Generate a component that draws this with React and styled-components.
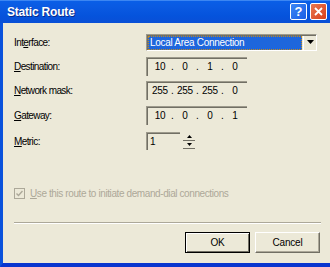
import styled, { createGlobalStyle } from "styled-components";

const GlobalStyle = createGlobalStyle`
  body {
    margin: 0;
    background: #ffffff;
  }
`;

const Window = styled.div`
  width: 330px;
  height: 267px;
  display: flex;
  flex-direction: column;
  font-family: "Liberation Sans", Arial, sans-serif;
  font-size: 10px;
  color: #000;
  overflow: hidden;
`;

const TitleBar = styled.div`
  height: 23px;
  flex: 0 0 23px;
  display: flex;
  align-items: center;
  padding: 0 3px 0 7px;
  background: linear-gradient(#0a5fe8 0%, #0a5ae2 30%, #0553dc 70%, #0a4fd6 100%);
  box-shadow: inset 0 1px 0 #3c86f2;
`;

const Title = styled.span`
  color: #fff;
  font-weight: bold;
  font-size: 12px;
  letter-spacing: -0.2px;
  text-shadow: 1px 1px 0 #0a2b8a;
  margin-top: 1px;
`;

const CaptionButtons = styled.div`
  margin-left: auto;
  display: flex;
  gap: 3px;
`;

const CaptionButton = styled.div`
  width: 15px;
  height: 15px;
  border: 1px solid #fff;
  border-radius: 2px;
  display: flex;
  align-items: center;
  justify-content: center;
  background: ${(p) =>
    p.$close
      ? "linear-gradient(135deg, #e9774f, #d8401c)"
      : "linear-gradient(135deg, #3c86f4, #1a5ee6)"};
  color: #fff;
  font-weight: bold;
  font-size: 13px;
  line-height: 1;
`;

const Body = styled.div`
  flex: 1;
  display: flex;
  flex-direction: column;
  background: #ece9d8;
  border-left: 3px solid #0a52dc;
  border-bottom: 4px solid #0835cf;
  padding: 7px 10px 0 11px;
`;

const Row = styled.div`
  height: ${(p) => p.$h}px;
  display: flex;
  align-items: center;
`;

const Label = styled.span`
  width: 132px;
  flex: 0 0 132px;
  letter-spacing: -0.6px;
`;

const Combo = styled.div`
  width: 171px;
  height: 17px;
  display: flex;
  box-sizing: border-box;
  border-top: 1px solid #9d9a8c;
  border-left: 1px solid #9d9a8c;
  border-right: 1px solid #fff;
  border-bottom: 1px solid #fff;
  box-shadow: inset 1px 1px 0 #716f64;
  padding: 1px 0 0 1px;
`;

const ComboText = styled.div`
  flex: 1;
  background: #1e66dc;
  color: #fff;
  outline: 1px dotted #c48a1c;
  outline-offset: -1px;
  padding-left: 2px;
  display: flex;
  align-items: center;
  letter-spacing: -0.3px;
`;

const ComboButton = styled.div`
  width: 12px;
  background: #ece9d8;
  border-left: 1px solid #fff;
  display: flex;
  align-items: center;
  justify-content: center;
  margin-left: 1px;
`;

const Edit = styled.div`
  width: ${(p) => p.$w}px;
  height: ${(p) => p.$hh || 19}px;
  box-sizing: border-box;
  display: flex;
  align-items: center;
  border-top: 1px solid #9d9a8c;
  border-left: 1px solid #9d9a8c;
  box-shadow: inset 1px 1px 0 #716f64;
  padding-left: 3px;
`;

const Octet = styled.span`
  width: 20px;
  text-align: center;
  letter-spacing: -0.3px;
`;

const Dot = styled.span`
  width: 5px;
  text-align: center;
`;

const Spinner = styled.div`
  margin-left: 3px;
  width: 12px;
  height: 15px;
  display: flex;
  flex-direction: column;
  gap: 1px;
`;

const SpinPart = styled.div`
  flex: 1;
  border-bottom: 1px solid #716f64;
  display: flex;
  align-items: center;
  justify-content: center;
`;

const CheckRow = styled.div`
  margin-top: 32px;
  height: 14px;
  display: flex;
  align-items: center;
  gap: 5px;
  color: #aca899;
  letter-spacing: -0.4px;
  font-size: 10px;
`;

const CheckBox = styled.div`
  width: 9px;
  height: 9px;
  border: 1px solid #aca899;
  display: flex;
  align-items: center;
  justify-content: center;
`;

const Separator = styled.div`
  margin-top: 22px;
  margin-right: -1px;
  height: 0;
  border-top: 1px solid #aca899;
  border-bottom: 1px solid #fff;
`;

const ButtonRow = styled.div`
  margin-top: 8px;
  display: flex;
  justify-content: flex-end;
  gap: 5px;
`;

const Button = styled.div`
  width: 65px;
  height: 21px;
  box-sizing: border-box;
  display: flex;
  align-items: center;
  justify-content: center;
  background: #ece9d8;
  letter-spacing: -0.2px;
  border: 1px solid;
  border-color: ${(p) => (p.$default ? "#000" : "#fff #716f64 #716f64 #fff")};
  box-shadow: ${(p) =>
    p.$default
      ? "inset 1px 1px 0 #fff, inset -1px -1px 0 #716f64"
      : "inset -1px -1px 0 #aca899"};
`;

const IpEdit = ({ parts }) => (
  <Edit $w={101}>
    {parts.map((p, i) => (
      <span key={i} style={{ display: "contents" }}>
        {i > 0 && <Dot>.</Dot>}
        <Octet>{p}</Octet>
      </span>
    ))}
  </Edit>
);

export default function App() {
  return (
    <>
      <GlobalStyle />
      <Window>
        <TitleBar>
          <Title>Static Route</Title>
          <CaptionButtons>
            <CaptionButton>?</CaptionButton>
            <CaptionButton $close>
              <svg width="9" height="9" viewBox="0 0 9 9">
                <path d="M1 1L8 8M8 1L1 8" stroke="#fff" strokeWidth="1.8" />
              </svg>
            </CaptionButton>
          </CaptionButtons>
        </TitleBar>
        <Body>
          <Row $h={24}>
            <Label>
              Int<u>e</u>rface:
            </Label>
            <Combo>
              <ComboText>Local Area Connection</ComboText>
              <ComboButton>
                <svg width="7" height="5" viewBox="0 0 7 5">
                  <path d="M0 0H7L3.5 4Z" fill="#000" />
                </svg>
              </ComboButton>
            </Combo>
          </Row>
          <Row $h={24}>
            <Label>
              <u>D</u>estination:
            </Label>
            <IpEdit parts={["10", "0", "1", "0"]} />
          </Row>
          <Row $h={24}>
            <Label>
              <u>N</u>etwork mask:
            </Label>
            <IpEdit parts={["255", "255", "255", "0"]} />
          </Row>
          <Row $h={26}>
            <Label>
              <u>G</u>ateway:
            </Label>
            <IpEdit parts={["10", "0", "0", "1"]} />
          </Row>
          <Row $h={26}>
            <Label>
              <u>M</u>etric:
            </Label>
            <Edit $w={34} $hh={18}>
              1
            </Edit>
            <Spinner>
              <SpinPart>
                <svg width="5" height="3" viewBox="0 0 5 3">
                  <path d="M2.5 0L5 3H0Z" fill="#000" />
                </svg>
              </SpinPart>
              <SpinPart>
                <svg width="5" height="3" viewBox="0 0 5 3">
                  <path d="M0 0H5L2.5 3Z" fill="#000" />
                </svg>
              </SpinPart>
            </Spinner>
          </Row>
          <CheckRow>
            <CheckBox>
              <svg width="7" height="7" viewBox="0 0 7 7">
                <path d="M0.5 3.5L2.5 5.5L6.5 1" stroke="#aca899" strokeWidth="1.4" fill="none" />
              </svg>
            </CheckBox>
            <span>
              <u>U</u>se this route to initiate demand-dial connections
            </span>
          </CheckRow>
          <Separator />
          <ButtonRow>
            <Button $default>OK</Button>
            <Button>Cancel</Button>
          </ButtonRow>
        </Body>
      </Window>
    </>
  );
}
